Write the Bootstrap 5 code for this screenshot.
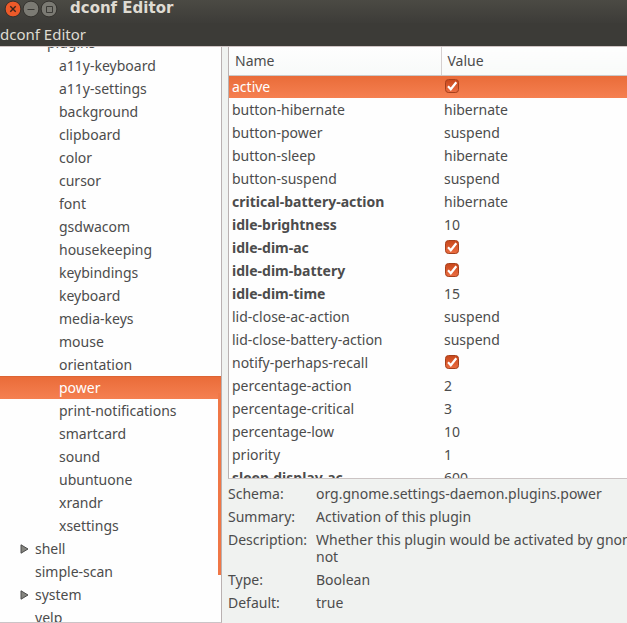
<!DOCTYPE html>
<html lang="en">
<head>
<meta charset="utf-8">
<meta name="viewport" content="width=device-width, initial-scale=1">
<title>dconf Editor</title>
<link href="https://cdn.jsdelivr.net/npm/bootstrap@5.3.0/dist/css/bootstrap.min.css" rel="stylesheet">
<style>
:root { --ink: #4c4c4c; --orange: #f07746; --line: #b9b1b1; --panel: #f0f2f0; }
body { font-family: "Noto Sans", "Open Sans", sans-serif; font-size: 14px; line-height: 17px; color: var(--ink); background: var(--panel); }
.titlebar { height: 23px; background: linear-gradient(#4b4a44, #3d3c38); color: #dfdbd2; padding: 0 4px; }
.titlebar h1 { font-family: "DejaVu Sans", sans-serif; font-size: 15px; line-height: 17px; margin: 0 0 0 12px; }
.titlebar svg { display: block; }
.menubar { height: 24px; background: #3c3b37; border-bottom: 1px solid #cfc4c4; }
.menubar button { color: #dfdbd2; font-size: 15px; line-height: 23px; }
.tree-pane { flex: 0 0 222px; background: #fefefe; border-right: 1px solid var(--line); border-bottom: 1px solid #cbc4c7; }
.tree { margin-top: -16px; }
.tree a { height: 23px; padding-left: 20px; color: var(--ink); }
.tree a.leaf { padding-left: 59px; }
.tree a.parent { padding-left: 47px; }
.tree svg { margin-right: 6px; }
.tree .twig { width: 9px; }
.tree a.chosen, .settings tr.chosen { color: #fff; background: linear-gradient(#e96b38, #f58051); box-shadow: inset 0 1px #dd6434; }
.thumb { top: 346px; width: 3px; height: 182px; background: var(--orange); }
.list-pane { background: #fefefe; border-left: 1px solid var(--line); border-bottom: 1px solid #cbc4c4; margin-left: 6px; }
.settings { table-layout: fixed; line-height: 17px; color: var(--ink); }
.settings th { height: 28px; padding: 0 6px; font-weight: 400; vertical-align: middle; background: linear-gradient(#fefefe, #f8faf9); border-bottom: 1px solid #c9c9c9; }
.settings th:first-child { width: 212px; border-right: 1px solid #d5d0d0; }
.settings td { height: 23px; padding: 0 3px; vertical-align: middle; color: inherit; border: 0; background: none; box-shadow: none; white-space: nowrap; }
.settings .changed td:first-child { font-weight: 700; }
.settings input { display: block; width: 14px; height: 14px; margin: 0 0 1px 1px; border: 1px solid #a6401c; border-radius: 3px; }
.settings input:checked { border-color: #a6401c; background: url("data:image/svg+xml,%3Csvg xmlns='http://www.w3.org/2000/svg' viewBox='0 0 12 12'%3E%3Cpath d='M2 6.3L4.8 9.3L10.3 2.3' fill='none' stroke='white' stroke-width='2.2'/%3E%3C/svg%3E") center / 12px 12px no-repeat, linear-gradient(#c9481c, #ea6c40); }
.details { display: grid; grid-template-columns: 88px 1fr; row-gap: 6px; padding: 6px 0 12px 6px; white-space: nowrap; }
.details dt { font-weight: 400; }
</style>
<script src="https://cdn.jsdelivr.net/npm/bootstrap@5.3.0/dist/js/bootstrap.bundle.min.js" defer></script>
</head>
<body class="vh-100 d-flex flex-column overflow-hidden">
<header class="flex-shrink-0">
  <div class="titlebar d-flex align-items-start">
    <div class="d-flex">
      <button class="btn p-0 border-0" aria-label="Close"><svg width="18" height="18" viewBox="0 0 18 18"><circle cx="9" cy="9" r="7.9" fill="#ed5a29" stroke="#33312d"/><path d="M6.3 6.3l5.4 5.4m0-5.4l-5.4 5.4" stroke="#3b241b" stroke-width="1.4"/></svg></button>
      <button class="btn p-0 border-0" aria-label="Minimize"><svg width="18" height="18" viewBox="0 0 18 18"><circle cx="9" cy="9" r="7.9" fill="#7b7a73" stroke="#33312d"/><path d="M5.5 9.5h7" stroke="#3b3a36"/></svg></button>
      <button class="btn p-0 border-0" aria-label="Maximize"><svg width="18" height="18" viewBox="0 0 18 18"><circle cx="9" cy="9" r="7.9" fill="#7b7a73" stroke="#33312d"/><path d="M6.5 6.5h6v6h-6z" fill="none" stroke="#3b3a36"/></svg></button>
    </div>
    <h1 class="fw-bold">dconf Editor</h1>
  </div>
  <nav class="menubar"><button class="btn border-0 rounded-0 p-0 d-block">dconf Editor</button></nav>
</header>
<main class="d-flex flex-grow-1 overflow-hidden">
  <nav class="tree-pane position-relative overflow-hidden" aria-label="Schemas">
    <ul class="tree list-unstyled mb-0">
      <li><a href="#" class="parent d-flex align-items-center text-decoration-none">plugins</a></li>
      <li><a href="#" class="leaf d-flex align-items-center text-decoration-none">a11y-keyboard</a></li>
      <li><a href="#" class="leaf d-flex align-items-center text-decoration-none">a11y-settings</a></li>
      <li><a href="#" class="leaf d-flex align-items-center text-decoration-none">background</a></li>
      <li><a href="#" class="leaf d-flex align-items-center text-decoration-none">clipboard</a></li>
      <li><a href="#" class="leaf d-flex align-items-center text-decoration-none">color</a></li>
      <li><a href="#" class="leaf d-flex align-items-center text-decoration-none">cursor</a></li>
      <li><a href="#" class="leaf d-flex align-items-center text-decoration-none">font</a></li>
      <li><a href="#" class="leaf d-flex align-items-center text-decoration-none">gsdwacom</a></li>
      <li><a href="#" class="leaf d-flex align-items-center text-decoration-none">housekeeping</a></li>
      <li><a href="#" class="leaf d-flex align-items-center text-decoration-none">keybindings</a></li>
      <li><a href="#" class="leaf d-flex align-items-center text-decoration-none">keyboard</a></li>
      <li><a href="#" class="leaf d-flex align-items-center text-decoration-none">media-keys</a></li>
      <li><a href="#" class="leaf d-flex align-items-center text-decoration-none">mouse</a></li>
      <li><a href="#" class="leaf d-flex align-items-center text-decoration-none">orientation</a></li>
      <li><a href="#" class="leaf chosen d-flex align-items-center text-decoration-none" aria-current="true">power</a></li>
      <li><a href="#" class="leaf d-flex align-items-center text-decoration-none">print-notifications</a></li>
      <li><a href="#" class="leaf d-flex align-items-center text-decoration-none">smartcard</a></li>
      <li><a href="#" class="leaf d-flex align-items-center text-decoration-none">sound</a></li>
      <li><a href="#" class="leaf d-flex align-items-center text-decoration-none">ubuntuone</a></li>
      <li><a href="#" class="leaf d-flex align-items-center text-decoration-none">xrandr</a></li>
      <li><a href="#" class="leaf d-flex align-items-center text-decoration-none">xsettings</a></li>
      <li><a href="#" class="d-flex align-items-center text-decoration-none"><svg class="twig" width="9" height="10" viewBox="0 0 9 10"><path d="M1 .8L8 5L1 9.2z" fill="#85857f" stroke="#4c4c4c"/></svg>shell</a></li>
      <li><a href="#" class="d-flex align-items-center text-decoration-none"><svg class="twig" width="9" height="10"></svg>simple-scan</a></li>
      <li><a href="#" class="d-flex align-items-center text-decoration-none"><svg class="twig" width="9" height="10" viewBox="0 0 9 10"><path d="M1 .8L8 5L1 9.2z" fill="#85857f" stroke="#4c4c4c"/></svg>system</a></li>
      <li><a href="#" class="d-flex align-items-center text-decoration-none"><svg class="twig" width="9" height="10"></svg>yelp</a></li>
    </ul>
    <div class="thumb position-absolute end-0"></div>
  </nav>
  <section class="d-flex flex-column flex-grow-1 overflow-hidden">
    <div class="list-pane flex-grow-1 overflow-hidden">
      <table class="settings table mb-0">
        <thead><tr><th scope="col">Name</th><th scope="col">Value</th></tr></thead>
        <tbody class="border-0">
          <tr class="chosen"><td>active</td><td><input class="form-check-input" type="checkbox" checked aria-label="active"></td></tr>
          <tr><td>button-hibernate</td><td>hibernate</td></tr>
          <tr><td>button-power</td><td>suspend</td></tr>
          <tr><td>button-sleep</td><td>hibernate</td></tr>
          <tr><td>button-suspend</td><td>suspend</td></tr>
          <tr class="changed"><td>critical-battery-action</td><td>hibernate</td></tr>
          <tr class="changed"><td>idle-brightness</td><td>10</td></tr>
          <tr class="changed"><td>idle-dim-ac</td><td><input class="form-check-input" type="checkbox" checked aria-label="idle-dim-ac"></td></tr>
          <tr class="changed"><td>idle-dim-battery</td><td><input class="form-check-input" type="checkbox" checked aria-label="idle-dim-battery"></td></tr>
          <tr class="changed"><td>idle-dim-time</td><td>15</td></tr>
          <tr><td>lid-close-ac-action</td><td>suspend</td></tr>
          <tr><td>lid-close-battery-action</td><td>suspend</td></tr>
          <tr><td>notify-perhaps-recall</td><td><input class="form-check-input" type="checkbox" checked aria-label="notify-perhaps-recall"></td></tr>
          <tr><td>percentage-action</td><td>2</td></tr>
          <tr><td>percentage-critical</td><td>3</td></tr>
          <tr><td>percentage-low</td><td>10</td></tr>
          <tr><td>priority</td><td>1</td></tr>
          <tr class="changed"><td>sleep-display-ac</td><td>600</td></tr>
        </tbody>
      </table>
    </div>
    <dl class="details flex-shrink-0 m-0">
      <dt>Schema:</dt><dd class="m-0">org.gnome.settings-daemon.plugins.power</dd>
      <dt>Summary:</dt><dd class="m-0">Activation of this plugin</dd>
      <dt>Description:</dt><dd class="m-0">Whether this plugin would be activated by gnome-settings-daemon or<br>not</dd>
      <dt>Type:</dt><dd class="m-0">Boolean</dd>
      <dt>Default:</dt><dd class="m-0">true</dd>
    </dl>
  </section>
</main>
</body>
</html>
